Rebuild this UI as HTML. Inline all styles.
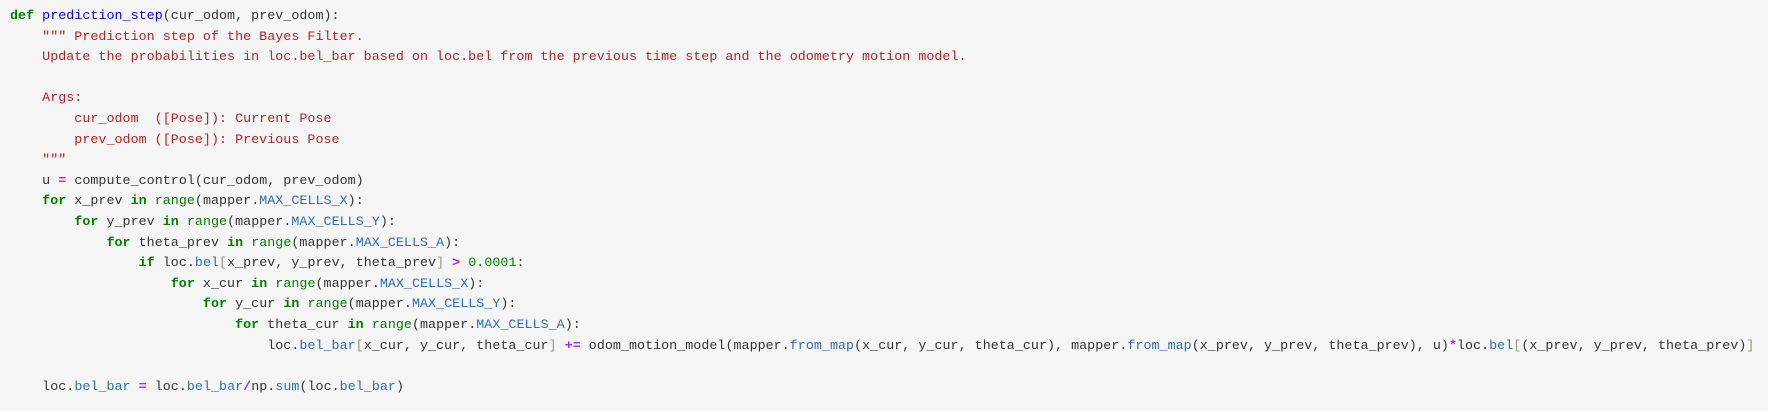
<!DOCTYPE html>
<html><head><meta charset="utf-8"><style>
html,body{margin:0;padding:0;background:#f5f5f5;width:1768px;height:411px;overflow:hidden}
pre{margin:0;position:absolute;left:10px;top:7px;font-family:"Liberation Mono",monospace;font-size:13.33px;letter-spacing:0.04px;line-height:20.6px;color:#333}
.k{color:#008000;font-weight:bold}
.f{color:#0000ff}
.s{color:#ba2121}
.b{color:#008000}
.a{color:#2a6cbb}
.o{color:#aa22ff;font-weight:bold}
.n{color:#008000}
.p{color:#999977}
</style></head><body><pre><span class="k">def</span> <span class="f">prediction_step</span>(cur_odom, prev_odom):
<span class="s">    """ Prediction step of the Bayes Filter.
    Update the probabilities in loc.bel_bar based on loc.bel from the previous time step and the odometry motion model.

    Args:
        cur_odom  ([Pose]): Current Pose
        prev_odom ([Pose]): Previous Pose
    """</span>
    u <span class="o">=</span> compute_control(cur_odom, prev_odom)
    <span class="k">for</span> x_prev <span class="k">in</span> <span class="b">range</span>(mapper.<span class="a">MAX_CELLS_X</span>):
        <span class="k">for</span> y_prev <span class="k">in</span> <span class="b">range</span>(mapper.<span class="a">MAX_CELLS_Y</span>):
            <span class="k">for</span> theta_prev <span class="k">in</span> <span class="b">range</span>(mapper.<span class="a">MAX_CELLS_A</span>):
                <span class="k">if</span> loc.<span class="a">bel</span><span class="p">[</span>x_prev, y_prev, theta_prev<span class="p">]</span> <span class="o">&gt;</span> <span class="n">0.0001</span>:
                    <span class="k">for</span> x_cur <span class="k">in</span> <span class="b">range</span>(mapper.<span class="a">MAX_CELLS_X</span>):
                        <span class="k">for</span> y_cur <span class="k">in</span> <span class="b">range</span>(mapper.<span class="a">MAX_CELLS_Y</span>):
                            <span class="k">for</span> theta_cur <span class="k">in</span> <span class="b">range</span>(mapper.<span class="a">MAX_CELLS_A</span>):
                                loc.<span class="a">bel_bar</span><span class="p">[</span>x_cur, y_cur, theta_cur<span class="p">]</span> <span class="o">+=</span> odom_motion_model(mapper.<span class="a">from_map</span>(x_cur, y_cur, theta_cur), mapper.<span class="a">from_map</span>(x_prev, y_prev, theta_prev), u)<span class="o">*</span>loc.<span class="a">bel</span><span class="p">[</span>(x_prev, y_prev, theta_prev)<span class="p">]</span>

    loc.<span class="a">bel_bar</span> <span class="o">=</span> loc.<span class="a">bel_bar</span><span class="o">/</span>np.<span class="a">sum</span>(loc.<span class="a">bel_bar</span>)
</pre></body></html>
